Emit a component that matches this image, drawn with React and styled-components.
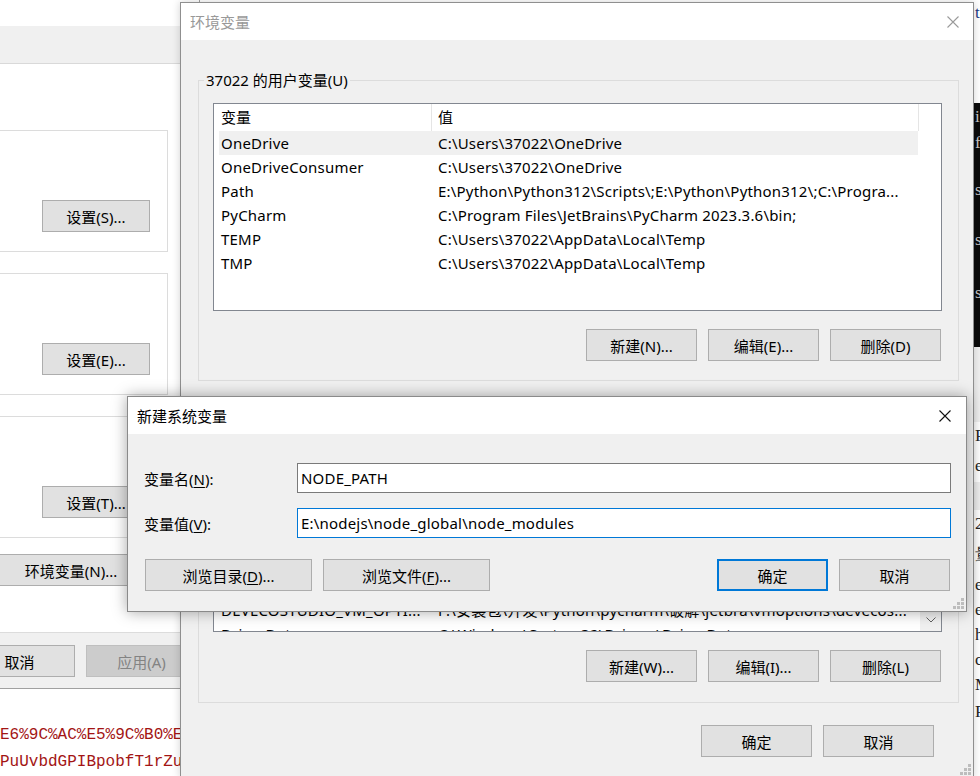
import React from 'react';
import styled, { createGlobalStyle, css } from 'styled-components';

const GlobalStyle = createGlobalStyle`
  html, body {
    margin: 0;
    padding: 0;
  }
  body {
    font-family: "Noto Sans", "Noto Sans CJK SC", sans-serif;
    font-size: 15px;
    color: #000;
  }
`;

const Desktop = styled.div`
  position: relative;
  width: 980px;
  height: 776px;
  overflow: hidden;
  background: #fff;
`;

/* editor behind everything */
const Editor = styled.div`
  position: absolute;
  inset: 0;
  display: flex;
  flex-direction: column;
  justify-content: flex-end;
  font-family: "Liberation Mono", monospace;
  font-size: 16px;
  line-height: 27px;
  color: #a31515;
  white-space: nowrap;
`;

const Strip = styled.div`
  position: absolute;
  left: 974px;
  top: 0;
  width: 6px;
  height: 776px;
  display: flex;
  flex-direction: column;
  overflow: hidden;
  font-family: "Liberation Serif", serif;
  font-size: 17px;
`;

const StripRow = styled.div`
  height: ${(p) => p.$h}px;
  flex: none;
  background: ${(p) => p.$bg || '#fff'};
  color: ${(p) => p.$fg || '#222'};
  line-height: ${(p) => p.$h}px;
  padding-left: 1px;
  white-space: nowrap;
`;

const Window = styled.div`
  position: absolute;
  left: ${(p) => p.$x}px;
  top: ${(p) => p.$y}px;
  width: ${(p) => p.$w}px;
  height: ${(p) => p.$h}px;
  box-sizing: border-box;
  display: flex;
  flex-direction: column;
  background: #f0f0f0;
  border: 1px solid ${(p) => p.$border || '#9a9a9a'};
  box-shadow: ${(p) => p.$shadow || 'none'};
`;

const TitleBar = styled.div`
  height: 37px;
  flex: none;
  display: flex;
  align-items: center;
  justify-content: space-between;
  padding: 0 ${(p) => p.$right}px 0 9px;
  background: #fff;
  color: ${(p) => (p.$inactive ? '#999' : '#000')};
`;

const Button = styled.button`
  box-sizing: border-box;
  width: ${(p) => p.$w || 111}px;
  height: 32px;
  flex: none;
  padding: 0;
  font: inherit;
  color: #000;
  background: #e1e1e1;
  border: 1px solid #adadad;
  white-space: nowrap;
  ${(p) =>
    p.$default &&
    css`
      border: 2px solid #0078d7;
    `}
  &:disabled {
    background: #cccccc;
    border-color: #bfbfbf;
    color: #838383;
  }
`;

const U = styled.span`
  text-decoration: underline;
  text-underline-offset: 2px;
`;

const Grip = styled.svg`
  position: absolute;
  right: 2px;
  bottom: 2px;
`;

const GripDots = () => (
  <Grip width="11" height="11" viewBox="0 0 11 11">
    {[[8, 0], [4, 4], [8, 4], [0, 8], [4, 8], [8, 8]].map(([x, y]) => (
      <rect key={`${x}-${y}`} x={x} y={y} width="3" height="3" fill="#bdbdbd" />
    ))}
  </Grip>
);

const CloseIcon = ({ color }) => (
  <svg width="12" height="12" viewBox="0 0 12 12">
    <path d="M0.5 0.5L11.5 11.5M11.5 0.5L0.5 11.5" stroke={color} strokeWidth="1.1" fill="none" />
  </svg>
);

/* system properties window (left, mostly hidden) */
const SysTop = styled.div`
  height: 26px;
  flex: none;
  background: #fff;
`;

const TabStrip = styled.div`
  height: 37px;
  flex: none;
  background: #f0f0f0;
  border-bottom: 1px solid #d9d9d9;
`;

const SysPage = styled.div`
  flex: 1;
  background: #fff;
  display: flex;
  flex-direction: column;
  align-items: flex-end;
  padding: 66px 31px 0 0;
  gap: 21px;
`;

const SysGroup = styled.div`
  width: 460px;
  height: 122px;
  box-sizing: border-box;
  border: 1px solid #dcdcdc;
  display: flex;
  align-items: flex-end;
  justify-content: flex-end;
  padding: 0 17px 19px 0;
`;

const EnvButtonRow = styled.div`
  margin-top: -5px;
  padding-right: 18px;
`;

const SysFooter = styled.div`
  height: 56px;
  flex: none;
  border-top: 1px solid #dcdcdc;
  display: flex;
  justify-content: flex-end;
  gap: 11px;
  padding: 12px 2px 0 0;
  box-sizing: border-box;
`;

/* environment variables dialog */
const EnvBody = styled.div`
  flex: 1;
  display: flex;
  flex-direction: column;
  padding: 0 14px 0 17px;
`;

const Group = styled.fieldset`
  margin: ${(p) => p.$top}px 0 0;
  padding: 0 16px ${(p) => p.$bottom}px 14px;
  border: 1px solid #dcdcdc;
  min-width: 0;
  display: flex;
  flex-direction: column;
`;

const Legend = styled.legend`
  padding: 0 2px;
  margin-left: -9px;
  line-height: 20px;
`;

const ListBox = styled.div`
  box-sizing: border-box;
  height: ${(p) => p.$h}px;
  margin-top: 13px;
  border: 1px solid #828790;
  background: #fff;
  display: flex;
  overflow: hidden;
`;

const ListMain = styled.div`
  flex: 1;
  min-width: 0;
  padding-left: 5px;
`;

const HeaderRow = styled.div`
  display: flex;
  height: 27px;
`;

const HeaderCell = styled.div`
  width: ${(p) => p.$w}px;
  box-sizing: border-box;
  padding-left: ${(p) => p.$pad}px;
  border-right: 1px solid #e5e5e5;
  line-height: 26px;
`;

const Rows = styled.div`
  margin-top: ${(p) => p.$offset || 0}px;
`;

const Row = styled.div`
  display: flex;
  width: 699px;
  height: 24px;
  background: ${(p) => (p.$selected ? '#f0f0f0' : 'transparent')};
`;

const Cell = styled.div`
  width: ${(p) => p.$w}px;
  flex: none;
  box-sizing: border-box;
  padding-left: ${(p) => p.$pad}px;
  line-height: 24px;
  letter-spacing: 0.2px;
  white-space: nowrap;
  overflow: hidden;
`;

const ScrollBar = styled.div`
  width: 21px;
  flex: none;
  background: #f0f0f0;
  display: flex;
  flex-direction: column;
  justify-content: flex-end;
  align-items: center;
`;

const ArrowButton = styled.div`
  height: 22px;
  display: flex;
  align-items: center;
  justify-content: center;
`;

const ButtonRow = styled.div`
  display: flex;
  justify-content: flex-end;
  gap: 11px;
  margin: 18px 1px 0 0;
`;

const DialogFooter = styled.div`
  display: flex;
  justify-content: flex-end;
  gap: 11px;
  margin-top: 22px;
  padding-right: 25px;
`;

/* new system variable dialog */
const NewBody = styled.div`
  flex: 1;
  display: flex;
  flex-direction: column;
  padding: 29px 15px 0 16px;
`;

const FieldGrid = styled.div`
  display: grid;
  grid-template-columns: 153px 1fr;
  row-gap: 15px;
  align-items: center;
`;

const Input = styled.div`
  box-sizing: border-box;
  height: 30px;
  border: 1px solid ${(p) => (p.$focus ? '#0078d7' : '#7a7a7a')};
  background: #fff;
  padding-left: 3px;
  line-height: 28px;
  letter-spacing: 0.2px;
  white-space: nowrap;
`;

const NewButtons = styled.div`
  display: flex;
  justify-content: space-between;
  margin-top: 21px;
  padding: 0 1px 0 1px;
`;

const ButtonGroup = styled.div`
  display: flex;
  gap: 11px;
`;

const userVars = [
  ['OneDrive', 'C:\\Users\\37022\\OneDrive'],
  ['OneDriveConsumer', 'C:\\Users\\37022\\OneDrive'],
  ['Path', 'E:\\Python\\Python312\\Scripts\\;E:\\Python\\Python312\\;C:\\Progra...'],
  ['PyCharm', 'C:\\Program Files\\JetBrains\\PyCharm 2023.3.6\\bin;'],
  ['TEMP', 'C:\\Users\\37022\\AppData\\Local\\Temp'],
  ['TMP', 'C:\\Users\\37022\\AppData\\Local\\Temp'],
];

const systemVars = [
  ['APPCODE_VM_OPTIONS', 'F:\\安装包\\开发\\Python\\pycharm\\破解\\jetbra\\vmoptions\\appcode...'],
  ['CLASSPATH', '.;%JAVA_HOME%\\lib;%JAVA_HOME%\\lib\\tools.jar'],
  ['CLION_VM_OPTIONS', 'F:\\安装包\\开发\\Python\\pycharm\\破解\\jetbra\\vmoptions\\clion.v...'],
  ['ComSpec', 'C:\\Windows\\system32\\cmd.exe'],
  ['DATAGRIP_VM_OPTIONS', 'F:\\安装包\\开发\\Python\\pycharm\\破解\\jetbra\\vmoptions\\datagrip...'],
  ['DATASPELL_VM_OPTIONS', 'F:\\安装包\\开发\\Python\\pycharm\\破解\\jetbra\\vmoptions\\dataspell...'],
  ['DEVECOSTUDIO_VM_OPTI...', 'F:\\安装包\\开发\\Python\\pycharm\\破解\\jetbra\\vmoptions\\devecos...'],
  ['DriverData', 'C:\\Windows\\System32\\Drivers\\DriverData'],
];

function VarList({ height, rows, selected, scroll, offset }) {
  return (
    <ListBox $h={height}>
      <ListMain>
        <HeaderRow>
          <HeaderCell $w={213} $pad={2}>变量</HeaderCell>
          <HeaderCell $w={487} $pad={6}>值</HeaderCell>
        </HeaderRow>
        <Rows $offset={offset}>
          {rows.map(([name, value], i) => (
            <Row key={name} $selected={i === selected}>
              <Cell $w={212} $pad={2}>{name}</Cell>
              <Cell $w={487} $pad={7}>{value}</Cell>
            </Row>
          ))}
        </Rows>
      </ListMain>
      {scroll && (
        <ScrollBar>
          <ArrowButton>
            <svg width="10" height="6" viewBox="0 0 10 6">
              <path d="M0.5 0.5L5 5L9.5 0.5" stroke="#606060" fill="none" />
            </svg>
          </ArrowButton>
        </ScrollBar>
      )}
    </ListBox>
  );
}

function SystemProperties() {
  return (
    <Window $x={-320} $y={-1} $w={520} $h={690} $border="#a0a0a0">
      <SysTop />
      <TabStrip />
      <SysPage>
        <SysGroup>
          <Button $w={108}>设置(S)...</Button>
        </SysGroup>
        <SysGroup>
          <Button $w={108}>设置(E)...</Button>
        </SysGroup>
        <SysGroup>
          <Button $w={108}>设置(T)...</Button>
        </SysGroup>
        <EnvButtonRow>
          <Button $w={158}>环境变量(N)...</Button>
        </EnvButtonRow>
      </SysPage>
      <SysFooter>
        <Button>确定</Button>
        <Button>取消</Button>
        <Button disabled>应用(A)</Button>
      </SysFooter>
    </Window>
  );
}

function EnvironmentDialog() {
  return (
    <Window $x={180} $y={2} $w={794} $h={776} $border="#8f8f8f" $shadow="0 0 8px rgba(0,0,0,0.18)">
      <TitleBar $inactive $right={14}>
        <span>环境变量</span>
        <CloseIcon color="#9a9a9a" />
      </TitleBar>
      <EnvBody>
        <Group $top={30} $bottom={19}>
          <Legend>37022 的用户变量(U)</Legend>
          <VarList height={208} rows={userVars} selected={0} />
          <ButtonRow>
            <Button>新建(N)...</Button>
            <Button>编辑(E)...</Button>
            <Button>删除(D)</Button>
          </ButtonRow>
        </Group>
        <Group $top={16} $bottom={20}>
          <Legend>系统变量(S)</Legend>
          <VarList height={202} rows={systemVars} scroll offset={-4} />
          <ButtonRow>
            <Button>新建(W)...</Button>
            <Button>编辑(I)...</Button>
            <Button>删除(L)</Button>
          </ButtonRow>
        </Group>
        <DialogFooter>
          <Button>确定</Button>
          <Button>取消</Button>
        </DialogFooter>
      </EnvBody>
      <GripDots />
    </Window>
  );
}

function NewVariableDialog() {
  return (
    <Window $x={127} $y={396} $w={840} $h={216} $border="#8a8a8a" $shadow="0 0 14px rgba(0,0,0,0.35)">
      <TitleBar $right={15}>
        <span>新建系统变量</span>
        <CloseIcon color="#111" />
      </TitleBar>
      <NewBody>
        <FieldGrid>
          <span>
            变量名(<U>N</U>):
          </span>
          <Input>NODE_PATH</Input>
          <span>
            变量值(<U>V</U>):
          </span>
          <Input $focus>E:\nodejs\node_global\node_modules</Input>
        </FieldGrid>
        <NewButtons>
          <ButtonGroup>
            <Button $w={167}>
              浏览目录(<U>D</U>)...
            </Button>
            <Button $w={167}>
              浏览文件(<U>F</U>)...
            </Button>
          </ButtonGroup>
          <ButtonGroup>
            <Button $default>确定</Button>
            <Button>取消</Button>
          </ButtonGroup>
        </NewButtons>
      </NewBody>
      <GripDots />
    </Window>
  );
}

export default function App() {
  return (
    <>
      <GlobalStyle />
      <Desktop>
        <Editor>
          <div>E6%9C%AC%E5%9C%B0%E5%AD%98%E5%82%A8</div>
          <div>PuUvbdGPIBpobfT1rZuQ8a</div>
        </Editor>
        <Strip>
          <StripRow $h={26} $fg="#1b3a84">t</StripRow>
          <StripRow $h={77} />
          <StripRow $h={28} $bg="#0c0c0c" $fg="#c8c8c8">i</StripRow>
          <StripRow $h={24} $bg="#0c0c0c" $fg="#c8c8c8">f</StripRow>
          <StripRow $h={23} $bg="#0c0c0c" />
          <StripRow $h={24} $bg="#0c0c0c" $fg="#c8c8c8">s</StripRow>
          <StripRow $h={26} $bg="#0c0c0c" />
          <StripRow $h={24} $bg="#0c0c0c" $fg="#c8c8c8">s</StripRow>
          <StripRow $h={29} $bg="#0c0c0c" />
          <StripRow $h={24} $bg="#0c0c0c" $fg="#c8c8c8">s</StripRow>
          <StripRow $h={42} $bg="#0c0c0c" />
          <StripRow $h={75} $bg="#f0f0f0" />
          <StripRow $h={28}>P</StripRow>
          <StripRow $h={32}>ej</StripRow>
          <StripRow $h={28} $bg="#eeeeee" />
          <StripRow $h={28}>2</StripRow>
          <StripRow $h={34}>量</StripRow>
          <StripRow $h={25}>el</StripRow>
          <StripRow $h={25}>el</StripRow>
          <StripRow $h={25}>h</StripRow>
          <StripRow $h={25}>ch</StripRow>
          <StripRow $h={25}>M</StripRow>
          <StripRow $h={30}>P</StripRow>
        </Strip>
        <SystemProperties />
        <EnvironmentDialog />
        <NewVariableDialog />
      </Desktop>
    </>
  );
}
